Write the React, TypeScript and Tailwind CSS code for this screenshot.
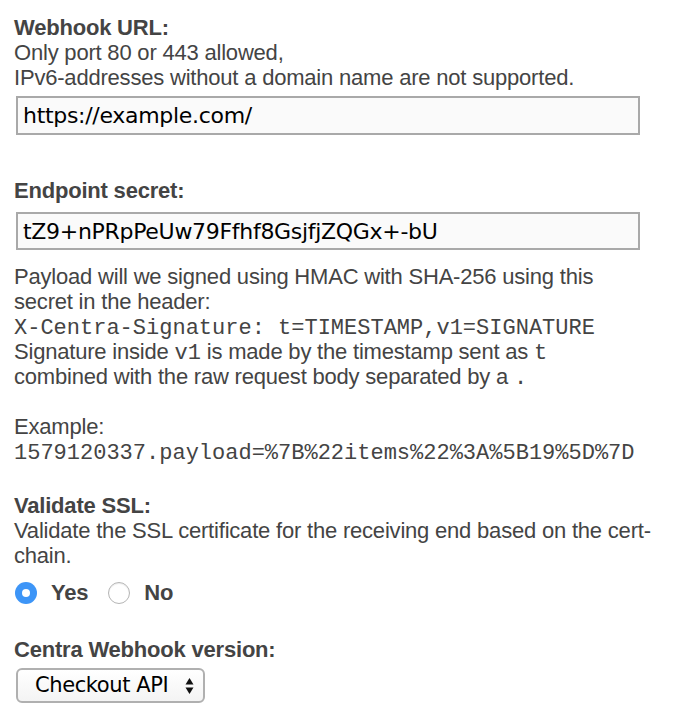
import { useState } from "react";

const body = "font-['Liberation_Sans',Arial,sans-serif] text-[22px] leading-[25px] text-[#444] tracking-[-0.2px]";
const mono = "font-['Liberation_Mono','Courier_New',monospace] text-[22px] leading-[20px] tracking-normal";
const field =
  "block w-[624px] ml-[2px] bg-[#fafafa] border-2 border-[#a9a9a9] px-[5px] text-[22px] text-black font-['DejaVu_Sans',sans-serif] tracking-[-0.3px] outline-none";

function Radio({ checked, label, onClick }: { checked: boolean; label: string; onClick: () => void }) {
  return (
    <button onClick={onClick} className="flex items-center gap-[14px]">
      {checked ? (
        <span className="w-[22px] h-[22px] rounded-full bg-[#3d95f7] flex items-center justify-center">
          <span className="w-[8px] h-[8px] rounded-full bg-white" />
        </span>
      ) : (
        <span className="w-[22px] h-[22px] rounded-full bg-white border border-[#b5b5b5] shadow-[inset_0_1px_1px_rgba(0,0,0,0.08)]" />
      )}
      <span className="font-bold">{label}</span>
    </button>
  );
}

export default function App() {
  const [ssl, setSsl] = useState(true);

  return (
    <div className={`${body} pl-[14px] pt-[15px] w-[674px] h-[724px] bg-white`}>
      <div className="font-bold">Webhook URL:</div>
      <div>Only port 80 or 443 allowed,</div>
      <div>IPv6-addresses without a domain name are not supported.</div>
      <input defaultValue="https://example.com/" className={`${field} mt-[6px] h-[39px]`} />

      <div className="font-bold mt-[43px]">Endpoint secret:</div>
      <input defaultValue="tZ9+nPRpPeUw79Ffhf8GsjfjZQGx+-bU" className={`${field} mt-[9px] h-[38px]`} />

      <div className="mt-[14px] pr-[40px]">
        Payload will we signed using HMAC with SHA-256 using this secret in the header:
        <br />
        <code className={mono}>X-Centra-Signature: t=TIMESTAMP,v1=SIGNATURE</code>
        <br />
        Signature inside <code className={mono}>v1</code> is made by the timestamp sent as{" "}
        <code className={mono}>t</code>
        <br />
        combined with the raw request body separated by a <code className={mono}>.</code>
        <br />
        <br />
        Example:
        <br />
        <code className={mono}>1579120337.payload=%7B%22items%22%3A%5B19%5D%7D</code>
      </div>

      <div className="font-bold mt-[29px]">Validate SSL:</div>
      <div className="pr-[10px]">Validate the SSL certificate for the receiving end based on the cert-chain.</div>
      <div className="flex items-center gap-[20px] mt-[12px] ml-[1px]">
        <Radio checked={ssl} label="Yes" onClick={() => setSsl(true)} />
        <Radio checked={!ssl} label="No" onClick={() => setSsl(false)} />
      </div>

      <div className="font-bold mt-[32px]">Centra Webhook version:</div>
      <div className="mt-[6px] ml-[2px] w-[189px] h-[35px] rounded-[6px] border-2 border-[#b0b0b0] bg-gradient-to-b from-white to-[#f4f4f4] flex items-center pl-[17px] pr-[9px] text-black font-['DejaVu_Sans',sans-serif] text-[21px] tracking-[-0.4px]">
        <span className="flex-1 whitespace-nowrap">Checkout API</span>
        <svg width="9" height="18" viewBox="0 0 9 18" className="shrink-0">
          <path d="M4.5 1 L8.5 7.5 L0.5 7.5 Z" fill="#111" />
          <path d="M4.5 17 L8.5 10.5 L0.5 10.5 Z" fill="#111" />
        </svg>
      </div>
    </div>
  );
}
